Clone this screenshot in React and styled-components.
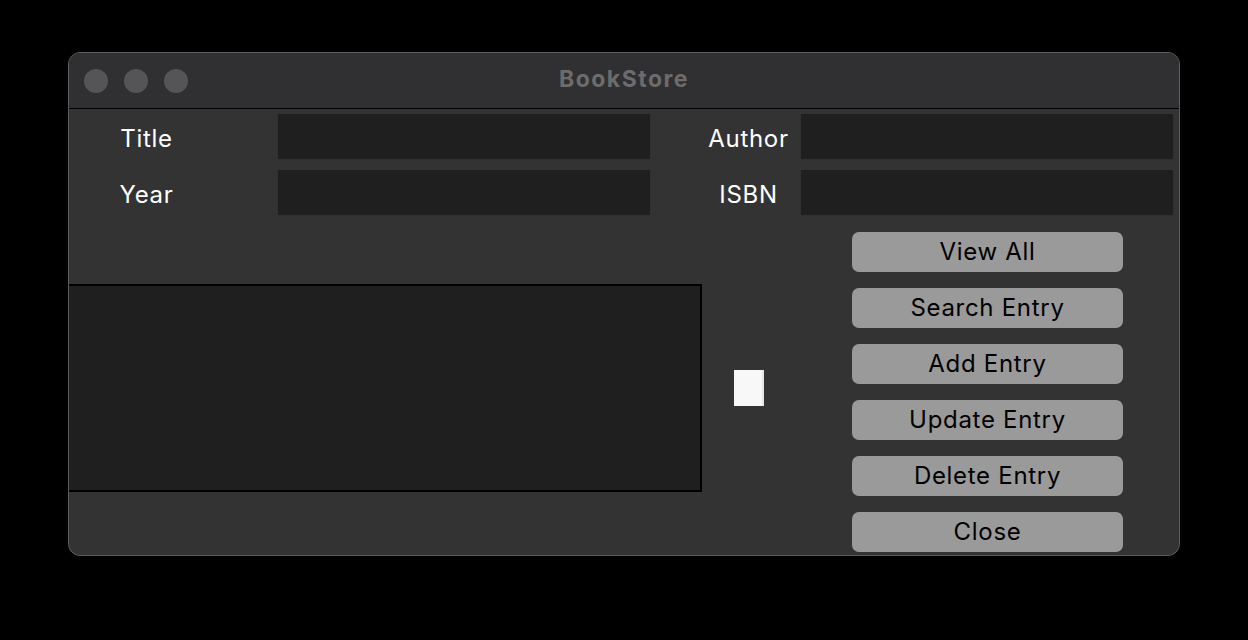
import React from "react";
import styled, { createGlobalStyle } from "styled-components";

const Global = createGlobalStyle`
  html, body { margin: 0; padding: 0; background: #000; }
  body { font-family: Inter, "Liberation Sans", sans-serif; }
  * { box-sizing: border-box; }
`;

const Page = styled.div`
  width: 1248px;
  height: 640px;
  padding: 52px 0 0 68px;
  background: #000;
`;

const Window = styled.div`
  width: 1112px;
  height: 504px;
  border: 1px solid #5d5d5f;
  border-radius: 12px;
  overflow: hidden;
  background: #333333;
  display: flex;
  flex-direction: column;
`;

const TitleBar = styled.div`
  height: 56px;
  flex: none;
  background: #303032;
  border-bottom: 1px solid #000;
  display: grid;
  grid-template-columns: 1fr auto 1fr;
  align-items: center;
  padding: 0 15px;
`;

const Lights = styled.div`
  display: flex;
  gap: 16px;
`;

const Light = styled.span`
  width: 24px;
  height: 24px;
  border-radius: 50%;
  background: #555557;
`;

const WinTitle = styled.div`
  font-family: Inter, "Liberation Sans", sans-serif;
  font-weight: 700;
  font-size: 23px;
  color: #6c6c6c;
  letter-spacing: 1.5px;
  margin-top: -4px;
`;

const Content = styled.div`
  flex: 1;
  display: flex;
  flex-direction: column;
`;

const Form = styled.div`
  display: grid;
  grid-template-columns: 209px 372px 151px 372px;
  grid-auto-rows: 44px;
  row-gap: 12px;
  margin-top: 5px;
  align-items: center;
`;

const Label = styled.div`
  width: ${(p) => p.$w}px;
  margin-left: ${(p) => p.$lead || 0}px;
  text-align: center;
  color: #ffffff;
  font-size: 24px;
  letter-spacing: 0.7px;
  padding-top: 6px;
  line-height: 38px;
`;

const Entry = styled.div`
  height: 44px;
  background: #1f1f1f;
  box-shadow: 0 1px 1px rgba(0, 0, 0, 0.35);
`;

const Lower = styled.div`
  display: flex;
  align-items: flex-start;
`;

const ListGroup = styled.div`
  display: flex;
  align-items: center;
  margin-top: 70px;
  margin-left: -2px;
`;

const ListBox = styled.div`
  width: 635px;
  height: 208px;
  background: #1f1f1f;
  border: 2px solid #000;
`;

const ScrollThumb = styled.div`
  width: 30px;
  height: 36px;
  margin-left: 32px;
  background: #f8f8f8;
  border-right: 2px solid #e6e6e6;
`;

const Buttons = styled.div`
  display: flex;
  flex-direction: column;
  gap: 16px;
  margin-top: 18px;
  margin-left: 88px;
`;

const Button = styled.button`
  width: 271px;
  height: 40px;
  border: none;
  border-radius: 7px;
  background: #9a9a9a;
  color: #000;
  font-family: Inter, "Liberation Sans", sans-serif;
  font-size: 24px;
  letter-spacing: 0.7px;
  padding: 0 0 2px;
  display: flex;
  align-items: center;
  justify-content: center;
`;

const fields = [
  ["Title", "Author"],
  ["Year", "ISBN"],
];

const actions = ["View All", "Search Entry", "Add Entry", "Update Entry", "Delete Entry", "Close"];

export default function App() {
  return (
    <Page>
      <Global />
      <Window>
        <TitleBar>
          <Lights>
            <Light />
            <Light />
            <Light />
          </Lights>
          <WinTitle>BookStore</WinTitle>
          <div />
        </TitleBar>
        <Content>
          <Form>
            {fields.map(([a, b]) => (
              <React.Fragment key={a}>
                <Label $w={155}>{a}</Label>
                <Entry />
                <Label $w={105} $lead={46}>{b}</Label>
                <Entry />
              </React.Fragment>
            ))}
          </Form>
          <Lower>
            <ListGroup>
              <ListBox />
              <ScrollThumb />
            </ListGroup>
            <Buttons>
              {actions.map((t) => (
                <Button key={t}>{t}</Button>
              ))}
            </Buttons>
          </Lower>
        </Content>
      </Window>
    </Page>
  );
}
